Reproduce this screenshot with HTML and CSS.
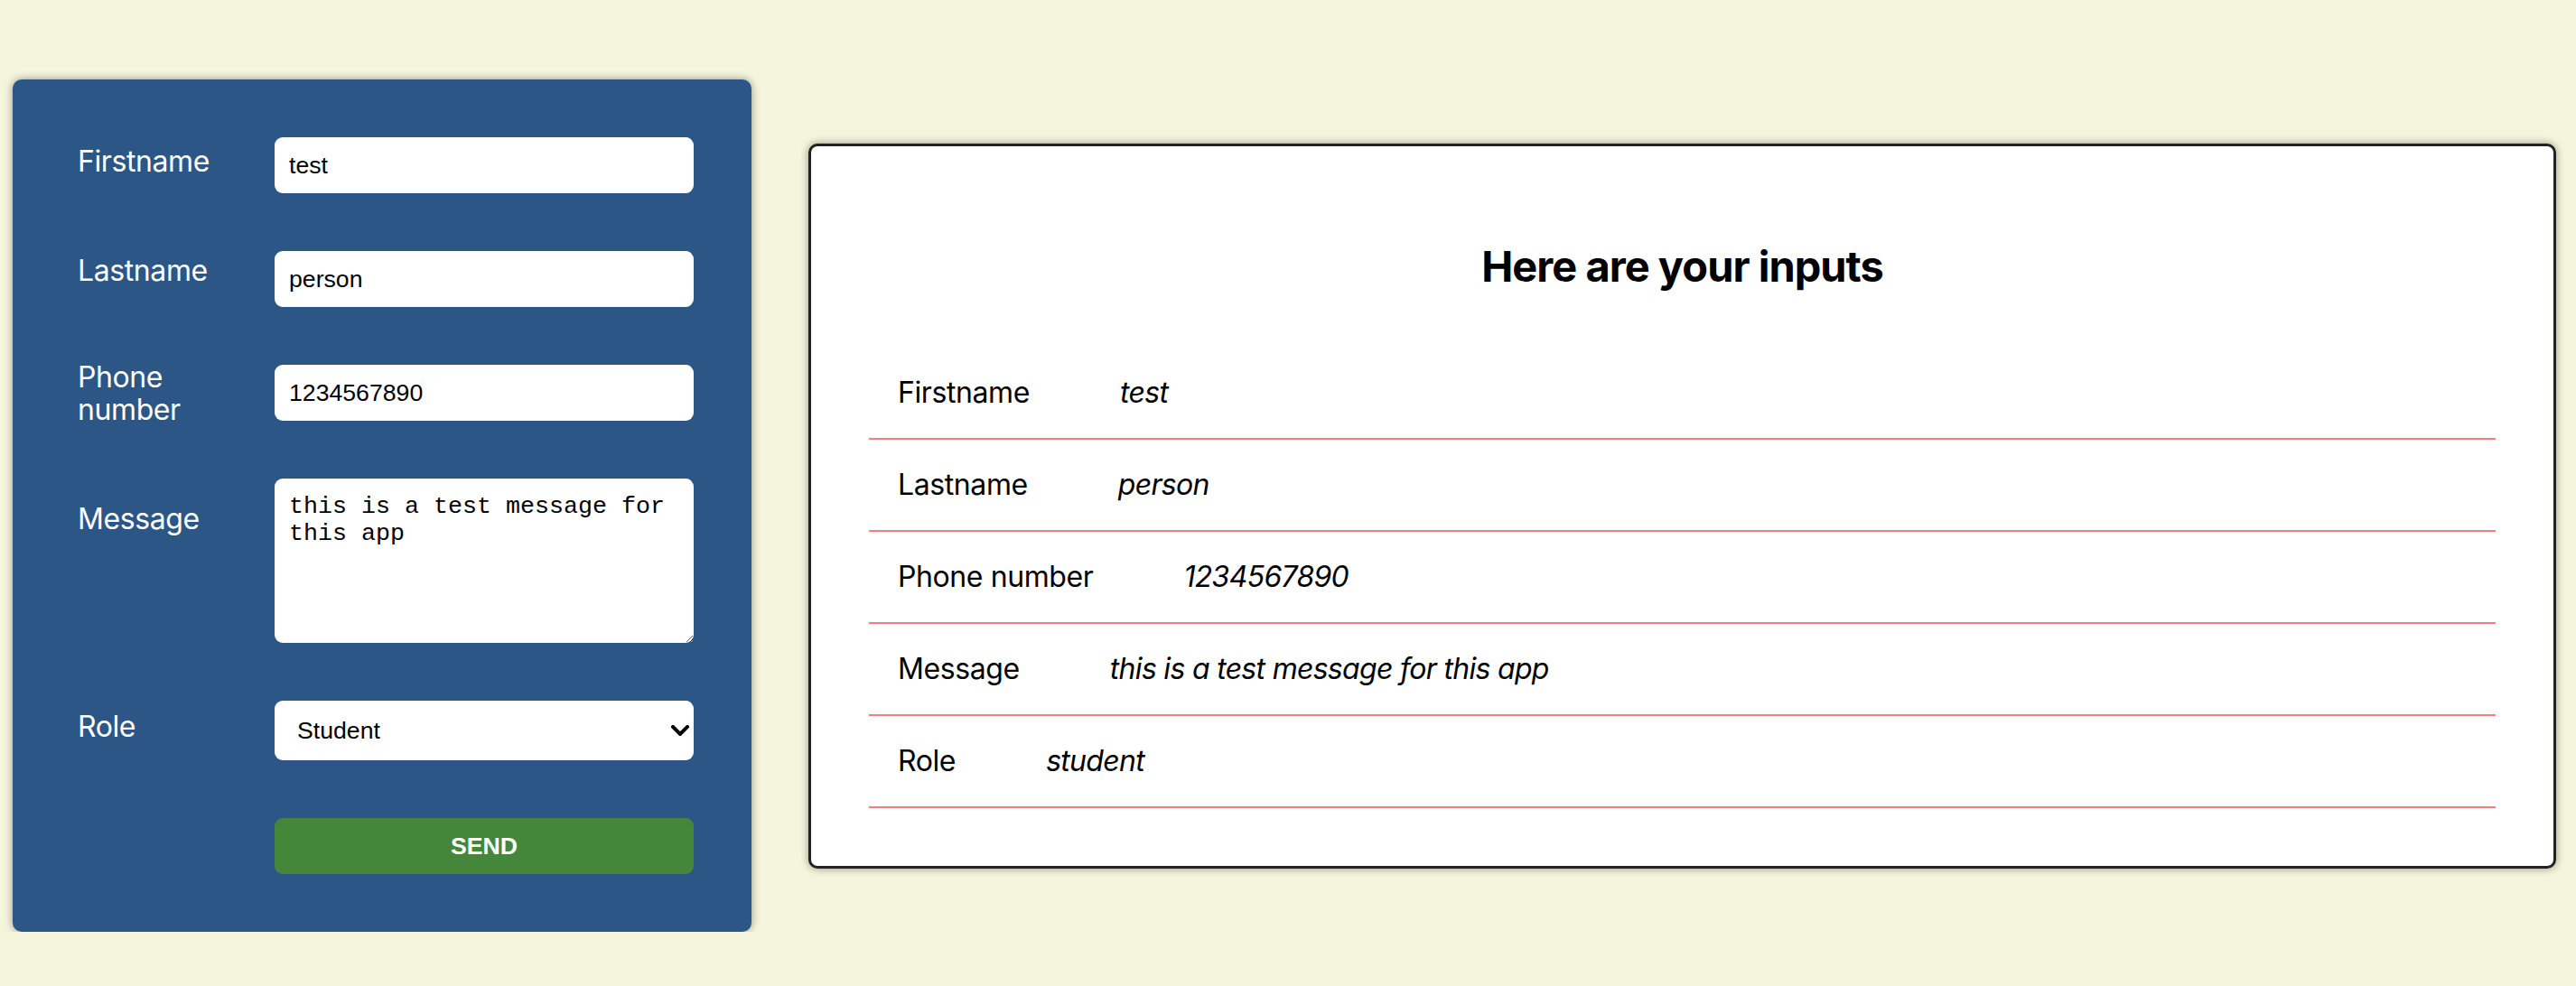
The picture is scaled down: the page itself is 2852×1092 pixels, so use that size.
FILE: index.html
```html
<!DOCTYPE html>
<html lang="en">
<head>
<meta charset="utf-8">
<title>Form</title>
<link rel="stylesheet" href="styles.css">
</head>
<body>
<main class="page">
  <form class="form-card">
    <label class="lbl lbl-first" for="fn">Firstname</label>
    <input class="field" id="fn" type="text" value="test">

    <label class="lbl lbl-last" for="ln">Lastname</label>
    <input class="field" id="ln" type="text" value="person">

    <label class="lbl lbl-phone" for="ph">Phone<br>number</label>
    <input class="field" id="ph" type="text" value="1234567890">

    <label class="lbl lbl-msg" for="msg">Message</label>
    <textarea class="area" id="msg">this is a test message for this app</textarea>

    <label class="lbl lbl-role" for="role">Role</label>
    <div class="select-wrap">
      <select class="select" id="role">
        <option>Student</option>
        <option>Teacher</option>
      </select>
      <svg class="chev" width="20" height="12" viewBox="0 0 20 12"><path d="M2 2 L10 10 L18 2" fill="none" stroke="#000" stroke-width="4" stroke-linecap="square"/></svg>
    </div>

    <span></span>
    <button class="send" type="button">SEND</button>
  </form>

  <section class="result-card">
    <h2 class="title">Here are your inputs</h2>
    <div class="row"><span class="key">Firstname</span><span class="val">test</span></div>
    <div class="row"><span class="key">Lastname</span><span class="val">person</span></div>
    <div class="row"><span class="key">Phone number</span><span class="val">1234567890</span></div>
    <div class="row"><span class="key">Message</span><span class="val">this is a test message for this app</span></div>
    <div class="row"><span class="key">Role</span><span class="val">student</span></div>
  </section>
</main>
</body>
</html>
```

FILE: styles.css
```css
* { box-sizing: border-box; }

html, body {
  margin: 0;
  background: #f5f4dc;
}

.page {
  display: flex;
  align-items: center;
  gap: 63px;
  padding: 88px 22px 0 14px;
}

.form-card {
  flex: 0 0 818px;
  background: #2b5685;
  border-radius: 10px;
  padding: 64px;
  box-shadow: 0 0 10px rgba(0, 0, 0, 0.4);
  display: grid;
  grid-template-columns: 226px 1fr;
  row-gap: 64px;
  align-items: start;
}

.lbl {
  color: #fff;
  font-family: Inter, "Noto Sans", sans-serif;
  font-size: 32px;
  line-height: 36px;
  letter-spacing: -0.4px;
  padding-left: 8px;
}
.lbl-first { margin-top: 9px; }
.lbl-last { margin-top: 4px; }
.lbl-phone { margin-top: -4px; margin-bottom: -6px; }
.lbl-msg { margin-top: 27px; }
.lbl-role { margin-top: 11px; }

.field,
.area,
.select {
  width: 100%;
  border: none;
  border-radius: 9px;
  background: #fff;
  color: #000;
  outline: none;
  margin: 0;
}

.field {
  height: 62px;
  padding: 0 16px;
  font-family: "Liberation Sans", Arial, sans-serif;
  font-size: 26.67px;
}

.area {
  display: block;
  height: 182px;
  padding: 16px;
  font-family: "Liberation Mono", "Courier New", monospace;
  font-size: 26.67px;
  line-height: 30px;
  resize: both;
}

.select-wrap {
  position: relative;
}

.select {
  appearance: none;
  -webkit-appearance: none;
  height: 66px;
  padding: 0 60px 0 25px;
  font-family: "Liberation Sans", Arial, sans-serif;
  font-size: 26.67px;
}

.chev {
  position: absolute;
  right: 5px;
  top: 27px;
  pointer-events: none;
}

.send {
  height: 62px;
  width: 100%;
  border: none;
  border-radius: 9px;
  background: #45873a;
  color: #fff;
  font-family: "Liberation Sans", Arial, sans-serif;
  font-weight: bold;
  font-size: 26.67px;
  margin: 0;
}

.result-card {
  flex: 1 1 auto;
  background: #fff;
  border: 3px solid #222;
  border-radius: 10px;
  padding: 64px;
  box-shadow: 0 0 10px rgba(0, 0, 0, 0.4);
  font-family: Inter, "Noto Sans", sans-serif;
  color: #000;
}

.title {
  margin: 40px 0 61px;
  text-align: center;
  font-size: 47px;
  line-height: 58px;
  font-weight: 700;
  letter-spacing: -1px;
}

.row {
  display: flex;
  align-items: center;
  height: 102px;
  padding: 0 32px;
  border-bottom: 2px solid #f08080;
  font-size: 32px;
  letter-spacing: -0.4px;
}

.val {
  font-style: italic;
  margin-left: 100px;
  letter-spacing: -0.7px;
}
```
